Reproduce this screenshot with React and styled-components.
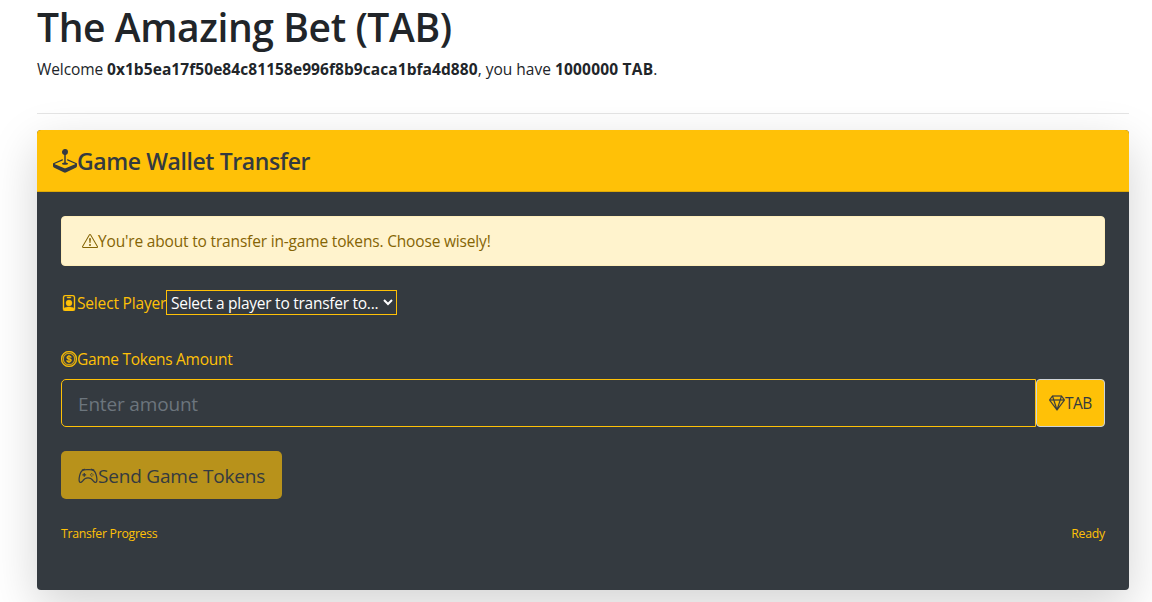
import React from "react";
import styled, { createGlobalStyle } from "styled-components";
import { BsJoystick, BsExclamationTriangle, BsPersonBadge, BsCoin, BsGem, BsController } from "react-icons/bs";

const GlobalStyle = createGlobalStyle`
  *, *::before, *::after { box-sizing: border-box; }
  html { overflow: hidden; }
  body {
    margin: 0;
    font-family: "Open Sans", "Noto Sans", sans-serif;
    font-size: 15.5px;
    line-height: 24px;
    color: #212529;
    background: #fff;
  }
`;

const Page = styled.main`
  height: 602px;
  overflow: hidden;
  padding: 3px 23px 0 37px;
`;

const Label = styled.span`
  font-size: ${(p) => p.$size || 15.5}px;
  letter-spacing: ${(p) => p.$track || 0}px;
  white-space: pre;
`;

const Title = styled.h1`
  margin: 0 0 6px;
  font-size: 39px;
  font-weight: 560;
  line-height: 48px;
`;

const Welcome = styled.p`
  margin: 0;
  height: 24px;
`;

const Rule = styled.hr`
  margin: 32px 0 16px;
  border: 0;
  border-top: 1px solid rgba(0, 0, 0, 0.1);
`;

const Card = styled.section`
  height: 460px;
  background: #343a40;
  border-radius: 4px;
  box-shadow: 0 16px 48px rgba(0, 0, 0, 0.175);
  overflow: hidden;
`;

const CardHeader = styled.header`
  display: flex;
  align-items: center;
  height: 62px;
  padding: 1px 16px 0;
  background: #ffc107;
  border-bottom: 1px solid #dfa906;
  color: #343a40;
`;

const CardTitle = styled.h4`
  display: flex;
  align-items: center;
  margin: 0;
  font-weight: 560;
  line-height: 29px;
`;

const CardBody = styled.div`
  padding: 24px;
  color: #ffc107;
`;

const Alert = styled.div`
  display: flex;
  align-items: center;
  height: 50px;
  padding: 0 20px;
  margin-bottom: 24px;
  background: #fff3cd;
  border: 1px solid #ffeeba;
  border-radius: 4px;
  color: #856404;
`;

const Field = styled.div`
  display: flex;
  align-items: center;
  height: ${(p) => p.$height || 25}px;
  margin-bottom: ${(p) => p.$gap}px;
`;

const PlayerLabel = styled.label`
  display: flex;
  align-items: center;
  width: 105px;
`;

const Select = styled.select`
  width: 231px;
  height: 25px;
  padding: 0;
  border: 1px solid #ffc107;
  border-radius: 0;
  background: #343a40;
  color: #fff;
  font-family: inherit;
  font-size: 15.5px;
  letter-spacing: ${(p) => p.$track}px;
`;

const InputGroup = styled.div`
  display: flex;
  height: 48px;
  margin-bottom: 24px;
`;

const AmountInput = styled.input`
  flex: 1;
  min-width: 0;
  padding: 2px 16px 0;
  border: 1px solid #ffc107;
  border-radius: 5px 0 0 5px;
  background: #343a40;
  color: #fff;
  font-family: inherit;
  font-size: 19px;
  letter-spacing: -0.17px;
  &::placeholder { color: #6c757d; }
`;

const Unit = styled.span`
  display: flex;
  align-items: center;
  width: 69px;
  padding-left: 12px;
  border: 1px solid #ced4da;
  border-radius: 4px;
  background: #ffc107;
  color: #343a40;
`;

const SendButton = styled.button`
  display: flex;
  align-items: center;
  width: 221px;
  height: 48px;
  padding: 1px 17px 0;
  border: 0;
  border-radius: 5px;
  background: #b8921b;
  color: #343a40;
  font-family: inherit;
`;

const Progress = styled.div`
  display: flex;
  justify-content: space-between;
  margin-top: 23px;
`;

const Icon = styled.span`
  display: flex;
  flex: none;
  svg {
    width: ${(p) => p.$size}px;
    height: ${(p) => p.$size}px;
    stroke-width: ${(p) => p.$stroke || 0};
  }
`;

export default function App() {
  return (
    <>
      <GlobalStyle />
      <Page>
        <Title><Label $size={39} $track={-0.4}>The Amazing Bet (TAB)</Label></Title>
        <Welcome>
          <Label $track={-0.1}>Welcome </Label>
          <Label as="strong" $track={0.07}>0x1b5ea17f50e84c81158e996f8b9caca1bfa4d880</Label>
          <Label>, you have </Label>
          <Label as="strong" $track={0.2}>1000000 TAB</Label>
          <Label>.</Label>
        </Welcome>
        <Rule />
        <Card>
          <CardHeader>
            <CardTitle>
              <Icon $size={24}><BsJoystick /></Icon>
              <Label $size={23} $track={-0.4}>Game Wallet Transfer</Label>
            </CardTitle>
          </CardHeader>
          <CardBody>
            <Alert>
              <Icon $size={16}><BsExclamationTriangle /></Icon>
              <Label $track={-0.17}>You're about to transfer in-game tokens. Choose wisely!</Label>
            </Alert>
            <Field $gap={32}>
              <PlayerLabel>
                <Icon $size={16} $stroke={0.4}><BsPersonBadge /></Icon>
                <Label $track={-0.17}>Select Player</Label>
              </PlayerLabel>
              <Select $track={-0.26} defaultValue="">
                <option value="">Select a player to transfer to...</option>
              </Select>
            </Field>
            <Field $height={24} $gap={8}>
              <Icon $size={16} $stroke={0.4}><BsCoin /></Icon>
              <Label $track={-0.29}>Game Tokens Amount</Label>
            </Field>
            <InputGroup>
              <AmountInput placeholder="Enter amount" />
              <Unit>
                <Icon $size={16} $stroke={0.2}><BsGem /></Icon>
                <Label $track={-0.5}>TAB</Label>
              </Unit>
            </InputGroup>
            <SendButton disabled>
              <Icon $size={20}><BsController /></Icon>
              <Label $size={19} $track={-0.19}>Send Game Tokens</Label>
            </SendButton>
            <Progress>
              <Label $size={12.3} $track={-0.3}>Transfer Progress</Label>
              <Label $size={12.3} $track={-0.25}>Ready</Label>
            </Progress>
          </CardBody>
        </Card>
      </Page>
    </>
  );
}
